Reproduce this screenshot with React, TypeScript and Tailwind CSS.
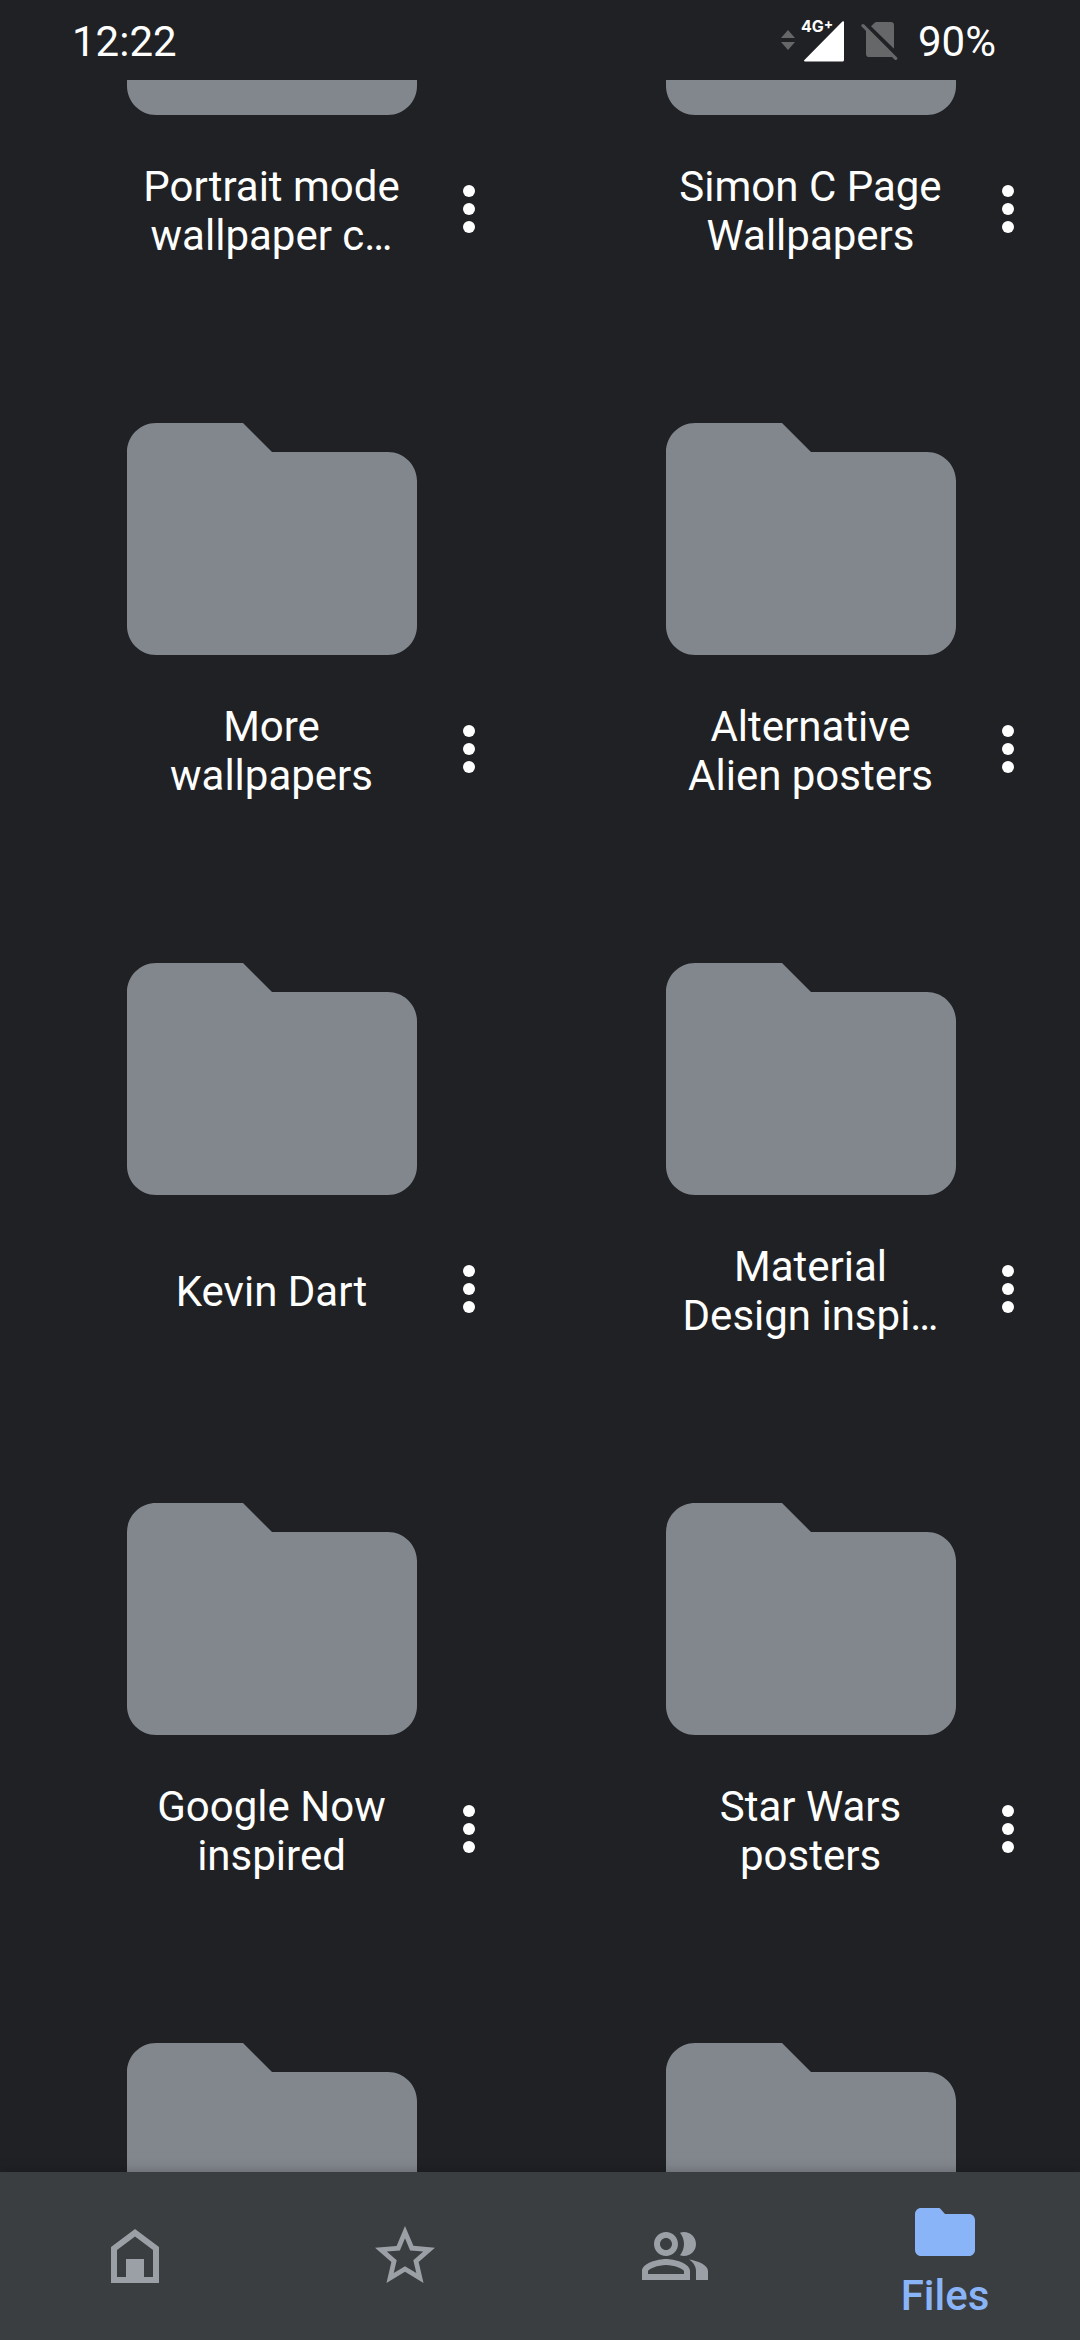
import type { ReactNode } from 'react'

const folders = [
  { id: 'portrait', name: 'Portrait mode wallpaper c…' },
  { id: 'simon', name: 'Simon C Page Wallpapers' },
  { id: 'more', name: 'More wallpapers' },
  { id: 'alien', name: 'Alternative Alien posters' },
  { id: 'kevin', name: 'Kevin Dart' },
  { id: 'material', name: 'Material Design inspi…' },
  { id: 'google-now', name: 'Google Now inspired' },
  { id: 'star-wars', name: 'Star Wars posters' },
  { id: 'next-left', name: '' },
  { id: 'next-right', name: '' },
]

const tabs = [
  {
    label: 'Home',
    path: 'M12 3L4 9v12h16V9l-8-6zM6 19v-9l6-4.5 6 4.5v9h-3v-6H9v6H6z',
  },
  {
    label: 'Starred',
    path: 'M22 9.24l-7.19-.62L12 2 9.19 8.63 2 9.24l5.46 4.73L5.82 21 12 17.27 18.18 21l-1.63-7.03L22 9.24zM12 15.4l-3.76 2.27 1-4.28-3.32-2.88 4.38-.38L12 6.1l1.71 4.04 4.38.38-3.32 2.88 1 4.28L12 15.4z',
  },
  {
    label: 'Shared',
    path: 'M9 12c2.21 0 4-1.79 4-4s-1.79-4-4-4-4 1.79-4 4 1.79 4 4 4zm0-6c1.1 0 2 .9 2 2s-.9 2-2 2-2-.9-2-2 .9-2 2-2zM9 13c-2.67 0-8 1.34-8 4v3h16v-3c0-2.66-5.33-4-8-4zm6 5H3v-.99C3.2 16.29 6.3 15 9 15s5.8 1.29 6 2v1zM15 12c2.21 0 4-1.79 4-4s-1.79-4-4-4c-.47 0-.91.1-1.33.24C14.5 5.27 15 6.58 15 8s-.5 2.73-1.33 3.76c.42.14.86.24 1.33.24zM16.67 13.13C18.04 14.06 19 15.32 19 17v3h4v-3c0-2.18-3.58-3.47-6.33-3.87z',
  },
  {
    label: 'Files',
    active: true,
    path: 'M10 4H4c-1.1 0-2 .9-2 2v12c0 1.1.9 2 2 2h16c1.1 0 2-.9 2-2V8c0-1.1-.9-2-2-2h-8l-1.4-1.6c-.2-.25-.4-.4-.6-.4z',
  },
]

function StatusBar() {
  return (
    <header className="flex h-20 shrink-0 items-center justify-between pt-0.5 pr-[84px] pl-[72px] text-[42px] leading-[49px]">
      <time>12:22</time>
      <div className="flex items-center">
        <div className="relative">
          <svg className="h-[42px] w-16" viewBox="0 0 64 42" aria-hidden="true">
            <path d="M0 18l7-8 7 8zM0 22h14l-7 8z" fill="#666768" />
            <path d="M24 41.5c-1 0-1.3-.8-.6-1.5L61.4 1.6c.7-.7 1.6-.4 1.6.6V40c0 .9-.6 1.5-1.5 1.5z" fill="#fff" />
          </svg>
          <span className="absolute -top-0.5 left-5 flex items-start font-[Inter,sans-serif] text-[16px] leading-4 font-bold">
            4G<span className="text-[14px] leading-3">+</span>
          </span>
        </div>
        <svg className="ml-4 h-[42px] w-[37px]" viewBox="360 60 111 126" aria-hidden="true">
          <path d="M390 79l11-11q2-2 5-2h43q10 0 10 10v70z" fill="#666768" />
          <path d="M375 86l81 85h-71q-10 0-10-10z" fill="#666768" />
          <path d="M366 77l98 98" stroke="#666768" strokeWidth="10" strokeLinecap="round" />
        </svg>
        <span className="ml-5">90%</span>
      </div>
    </header>
  )
}

function FolderCard({ name }: { name: string }) {
  return (
    <li className="flex flex-col pb-[163px]">
      <svg className="mx-auto h-[232px] w-[290px]" viewBox="0 0 20 16" fill="#82868d" aria-hidden="true">
        <path d="M2 0h6l2 2h8c1.1 0 2 .9 2 2v10c0 1.1-.9 2-2 2H2c-1.1 0-2-.9-2-2V2C0 .9.9 0 2 0z" />
      </svg>
      <div className="mt-[47px] grid h-[98px] grid-cols-[1fr_2fr_1fr] items-center">
        <span className="col-start-2 text-center text-[42px] leading-[49px]">{name}</span>
        <button type="button" className="flex justify-end pr-9" aria-label="More actions">
          <svg className="size-[72px]" viewBox="0 0 24 24" fill="currentColor" aria-hidden="true">
            <circle cx="12" cy="5.3" r="2" />
            <circle cx="12" cy="11.3" r="2" />
            <circle cx="12" cy="17.3" r="2" />
          </svg>
        </button>
      </div>
    </li>
  )
}

function TabIcon({ children }: { children: ReactNode }) {
  return (
    <svg className="size-[72px]" viewBox="0 0 24 24" fill="currentColor" fillRule="evenodd" aria-hidden="true">
      {children}
    </svg>
  )
}

export default function App() {
  return (
    <div className="flex h-screen flex-col overflow-hidden bg-[#202124] font-[Roboto,sans-serif] text-white">
      <StatusBar />

      {/* List is scrolled part way through the first row */}
      <main className="min-h-0 flex-1 overflow-hidden">
        <ul className="-mt-[197px] grid grid-cols-2 pl-0.5">
          {folders.map((folder) => (
            <FolderCard key={folder.id} name={folder.name} />
          ))}
        </ul>
      </main>

      <nav className="z-10 grid h-[168px] shrink-0 grid-cols-4 bg-[#3b3e40] shadow-[0_0_12px_rgba(0,0,0,0.25)]">
        {tabs.map((tab) => (
          <a
            key={tab.label}
            href="#"
            aria-label={tab.label}
            aria-current={tab.active ? 'page' : undefined}
            className={
              tab.active
                ? 'flex flex-col items-center pt-6 text-[#8ab4f8]'
                : 'flex flex-col items-center justify-center text-[#9aa0a6]'
            }
          >
            <TabIcon>
              <path d={tab.path} />
            </TabIcon>
            {tab.active && <span className="text-[42px] leading-14 font-medium">{tab.label}</span>}
          </a>
        ))}
      </nav>
    </div>
  )
}
